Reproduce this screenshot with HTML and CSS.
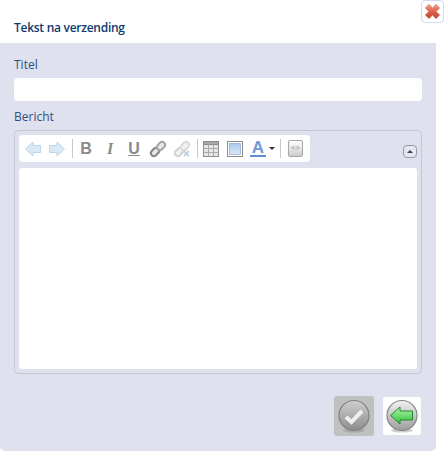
FILE: index.html
```html
<!DOCTYPE html>
<html>
<head>
    <title>Tekst na verzending</title>
    <link rel="stylesheet" href="styles.css">
</head>
<body>
    <div class="dialog">
        <a class="close-btn" href="#">
            <svg width="17" height="17" viewBox="0 0 17 17">
                <defs>
                    <linearGradient id="redGrad" x1="0" y1="0" x2="0" y2="1">
                        <stop offset="0" stop-color="#f0a590"/>
                        <stop offset="0.5" stop-color="#e0604a"/>
                        <stop offset="1" stop-color="#c04830"/>
                    </linearGradient>
                </defs>
                <path d="M8.5 4.5 L5 1 L1 5 L4.5 8.5 L1 12 L5 16 L8.5 12.5 L12 16 L16 12 L12.5 8.5 L16 5 L12 1 Z" fill="url(#redGrad)" stroke="#d8b8aa" stroke-width="1" stroke-linejoin="round"/>
            </svg>
        </a>

        <h2 class="dialog-title">Tekst na verzending</h2>

        <div class="panel">
            <label class="field-label">Titel</label>
            <input class="text-input" type="text">

            <label class="field-label">Bericht</label>
            <div class="editor">
                <div class="editor-top">
                    <div class="toolbar">
                        <!-- undo / redo -->
                        <svg class="tool" width="18" height="18" viewBox="0 0 18 18"><path d="M1.5 9 L9 2 V5.5 H16.5 V12.5 H9 V16 Z" fill="#dbe9f7" stroke="#bcd4ec" stroke-linejoin="round"/></svg>
                        <svg class="tool" width="18" height="18" viewBox="0 0 18 18"><path d="M16.5 9 L9 2 V5.5 H1.5 V12.5 H9 V16 Z" fill="#dbe9f7" stroke="#bcd4ec" stroke-linejoin="round"/></svg>
                        <span class="sep"></span>
                        <span class="tool-letter bold">B</span>
                        <span class="tool-letter italic">I</span>
                        <span class="tool-letter under">U</span>
                        <!-- link / unlink -->
                        <svg class="tool" width="18" height="18" viewBox="0 0 18 18"><g fill="#e8e8e8" stroke-width="2"><rect x="1.5" y="9" width="9" height="6" rx="3" transform="rotate(-45 6 12)" stroke="#858585"/><rect x="7.5" y="3" width="9" height="6" rx="3" transform="rotate(-45 12 6)" stroke="#a5a5a5"/></g></svg>
                        <svg class="tool" width="18" height="18" viewBox="0 0 18 18"><g fill="#f2f2f2" stroke-width="2"><rect x="1.5" y="9" width="9" height="6" rx="3" transform="rotate(-45 6 12)" stroke="#d2d2d2"/><rect x="7.5" y="3" width="9" height="6" rx="3" transform="rotate(-45 12 6)" stroke="#dadada"/></g><path d="M11 11 L16 16 M16 11 L11 16" stroke="#bfd2e8" stroke-width="1.8"/></svg>
                        <span class="sep"></span>
                        <!-- table -->
                        <svg class="tool" width="18" height="18" viewBox="0 0 18 18"><rect x="1.5" y="1.5" width="15" height="15" fill="#e6e6e6" stroke="#8c8c8c"/><rect x="1.5" y="1.5" width="15" height="3" fill="#a9a9a9" stroke="#8c8c8c"/><path d="M6.5 4.5 V16.5 M11.5 4.5 V16.5 M1.5 8.5 H16.5 M1.5 12.5 H16.5" stroke="#ababab"/></svg>
                        <!-- image box -->
                        <svg class="tool" width="18" height="18" viewBox="0 0 18 18"><defs><linearGradient id="boxGrad" x1="0" y1="0" x2="0" y2="1"><stop offset="0" stop-color="#a9c8ee"/><stop offset="1" stop-color="#dbe8f8"/></linearGradient></defs><rect x="1.5" y="1.5" width="15" height="15" fill="#fff" stroke="#8c8c8c"/><rect x="3.5" y="3.5" width="11" height="11" fill="url(#boxGrad)" stroke="#7f9fc8" stroke-width="0.6"/></svg>
                        <!-- text colour -->
                        <span class="color-tool">
                            <span class="color-letter">A</span>
                            <span class="caret"></span>
                        </span>
                        <span class="sep"></span>
                        <!-- source -->
                        <span class="source-btn">&lt;&gt;</span>
                    </div>
                    <span class="collapse-btn"><span class="collapse-arrow"></span></span>
                </div>
                <div class="editor-body"></div>
            </div>

            <div class="actions">
                <a class="action-btn disabled" href="#">
                    <svg width="34" height="34" viewBox="0 0 34 34">
                        <defs>
                            <linearGradient id="greyGrad" x1="0" y1="0" x2="0" y2="1">
                                <stop offset="0" stop-color="#cfcfcf"/>
                                <stop offset="1" stop-color="#8c8c8c"/>
                            </linearGradient>
                        </defs>
                        <ellipse cx="17" cy="31.5" rx="11" ry="2" fill="#a8a8a8"/>
                        <circle cx="17" cy="16.5" r="15" fill="url(#greyGrad)" stroke="#808080" stroke-width="1.2"/>
                        <path d="M9 18 L14.5 23 L25 12" fill="none" stroke="#efefef" stroke-width="4"/>
                    </svg>
                </a>
                <a class="action-btn" href="#">
                    <svg width="34" height="34" viewBox="0 0 34 34">
                        <defs>
                            <linearGradient id="ringGrad" x1="0" y1="0" x2="0" y2="1">
                                <stop offset="0" stop-color="#f2f2f2"/>
                                <stop offset="1" stop-color="#9c9c9c"/>
                            </linearGradient>
                            <linearGradient id="greenGrad" x1="0" y1="0" x2="0" y2="1">
                                <stop offset="0" stop-color="#b4f4ac"/>
                                <stop offset="1" stop-color="#2cc23c"/>
                            </linearGradient>
                        </defs>
                        <ellipse cx="17" cy="31.5" rx="11" ry="2" fill="#cfcfcf"/>
                        <circle cx="17" cy="16.5" r="15" fill="url(#ringGrad)" stroke="#858585" stroke-width="1.2"/>
                        <path d="M5.5 16.5 L15 8 V12 H27.5 V21 H15 V25 Z" fill="url(#greenGrad)" stroke="#1f8a2c" stroke-linejoin="round"/>
                    </svg>
                </a>
            </div>
        </div>
    </div>
</body>
</html>
```

FILE: styles.css
```css
body {
    margin: 0;
    background-color: white;
    font-family: "Open Sans", Arial, sans-serif;
}

.dialog {
    position: relative;
    width: 445px;
    height: 452px;
    overflow: hidden;
}

.close-btn {
    position: absolute;
    top: 0;
    right: 1px;
    width: 23px;
    height: 23px;
    display: flex;
    align-items: center;
    justify-content: center;
    box-sizing: border-box;
    background-color: white;
    border: 1px solid #d5d8ee;
    border-radius: 4px;
}

.dialog-title {
    margin: 0;
    height: 43px;
    padding: 20px 0 0 14px;
    box-sizing: border-box;
    font-size: 12px;
    letter-spacing: -0.27px;
    line-height: 16px;
    font-weight: 600;
    color: #0e3a6e;
}

.panel {
    width: 436px;
    height: 408px;
    padding: 13px 14px 0 14px;
    box-sizing: border-box;
    background-color: #dfe1ef;
    border-radius: 0 0 5px 5px;
}

.field-label {
    display: block;
    font-size: 12px;
    line-height: 17px;
    color: #2f4f7f;
}

.text-input {
    display: block;
    width: 408px;
    height: 23px;
    margin: 5px 0 7px 0;
    padding: 0;
    border: none;
    border-radius: 4px;
    background-color: white;
    box-sizing: border-box;
}

.editor {
    width: 408px;
    height: 244px;
    margin-top: 5px;
    padding: 4px;
    border: 1px solid #c6c7d3;
    border-radius: 4px;
    box-sizing: border-box;
}

.editor-top {
    display: flex;
    align-items: center;
    justify-content: space-between;
    height: 27px;
    margin-bottom: 6px;
}

.toolbar {
    display: flex;
    align-items: center;
    width: 291px;
    height: 27px;
    padding-left: 2px;
    box-sizing: border-box;
    background-color: white;
    border-radius: 4px;
}

.tool {
    margin: 0 3px;
}

.sep {
    width: 1px;
    height: 19px;
    margin: 0 1px 0 3px;
    background-color: #c8c8c8;
}

.tool-letter {
    width: 18px;
    margin: 0 3px;
    text-align: center;
    font-family: "Liberation Sans", Arial, sans-serif;
    font-size: 16px;
    font-weight: bold;
    line-height: 18px;
    color: #8a8a8a;
}

.tool-letter.italic {
    font-family: "Liberation Serif", serif;
    font-style: italic;
}

.tool-letter.under {
    text-decoration: underline;
}

.color-tool {
    display: flex;
    align-items: center;
    width: 25px;
    margin: 0 2px 0 3px;
}

.color-letter {
    width: 16px;
    font-family: "Liberation Sans", Arial, sans-serif;
    font-size: 17px;
    font-weight: bold;
    line-height: 15px;
    text-align: center;
    color: #6f9ad6;
    border-bottom: 2px solid #5f8fd0;
}

.caret {
    margin-left: 3px;
    border-left: 3px solid transparent;
    border-right: 3px solid transparent;
    border-top: 3px solid #333;
}

.source-btn {
    width: 15px;
    height: 17px;
    margin-left: 6px;
    box-sizing: border-box;
    border: 1px solid #a5a5a5;
    border-radius: 2px;
    background: linear-gradient(#ffffff, #cccccc);
    font-family: "Liberation Mono", monospace;
    font-size: 7px;
    line-height: 14px;
    text-align: center;
    color: #8a8a8a;
}

.collapse-btn {
    display: flex;
    align-items: center;
    justify-content: center;
    width: 14px;
    height: 13px;
    margin: 6px 0 0 0;
    box-sizing: border-box;
    border: 1px solid #9a9a9a;
    border-radius: 4px;
    background-color: #e6e7f0;
}

.collapse-arrow {
    border-left: 3px solid transparent;
    border-right: 3px solid transparent;
    border-bottom: 3px solid #444;
}

.editor-body {
    height: 201px;
    border-radius: 3px;
    background-color: white;
}

.actions {
    display: flex;
    justify-content: flex-end;
    align-items: center;
    gap: 9px;
    width: 407px;
    margin-top: 22px;
}

.action-btn {
    display: flex;
    align-items: center;
    justify-content: center;
    width: 38px;
    height: 38px;
    border-radius: 3px;
    background-color: white;
}

.action-btn.disabled {
    width: 40px;
    height: 40px;
    background-color: #c0c0c0;
}
```
